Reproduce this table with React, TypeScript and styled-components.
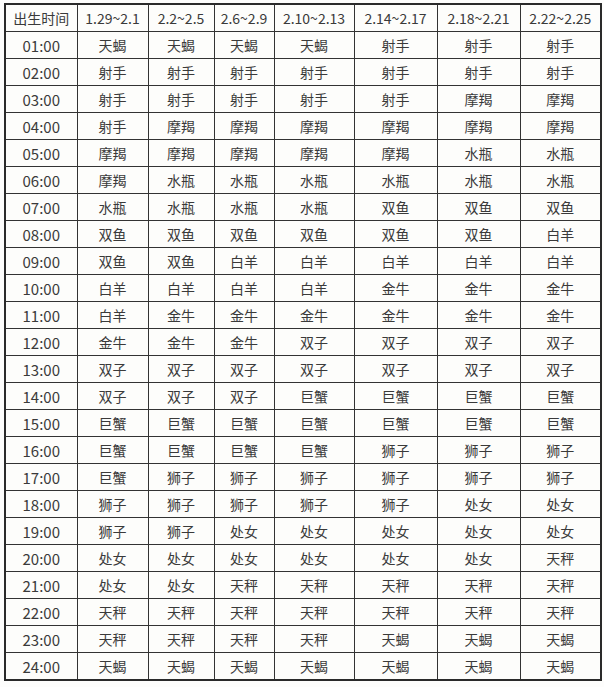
import React from 'react';
import styled, { createGlobalStyle } from 'styled-components';

const GlobalStyle = createGlobalStyle`
  html, body {
    margin: 0;
    padding: 0;
    background: #fdfdfc;
  }
  body {
    font-family: "Noto Sans CJK SC", "Noto Sans", sans-serif;
    color: #333;
  }
`;

const Page = styled.div`
  padding: 3px 0 0 4px;
`;

const Table = styled.table`
  border-collapse: collapse;
  table-layout: fixed;
  width: 596px;
  border: 2px solid #2a2a2a;
  background: #fdfdfb;
`;

const HeadCell = styled.th`
  height: 26px;
  padding: 0;
  border: 1px solid #333;
  font-weight: normal;
  font-size: 14px;
  line-height: 1;
  text-align: center;
  color: #3a3a3a;
  white-space: nowrap;
`;

const Cell = styled.td<{ $time?: boolean }>`
  height: 26px;
  padding: 0;
  border: 1px solid #333;
  font-size: ${({ $time }) => ($time ? '15px' : '14px')};
  line-height: 1;
  text-align: center;
  color: #3a3a3a;
`;

const columns = [
  { label: '出生时间', width: 72 },
  { label: '1.29~2.1', width: 71 },
  { label: '2.2~2.5', width: 66 },
  { label: '2.6~2.9', width: 60 },
  { label: '2.10~2.13', width: 80 },
  { label: '2.14~2.17', width: 83 },
  { label: '2.18~2.21', width: 83 },
  { label: '2.22~2.25', width: 81 },
];

const rows: string[][] = [
  ['01:00', '天蝎', '天蝎', '天蝎', '天蝎', '射手', '射手', '射手'],
  ['02:00', '射手', '射手', '射手', '射手', '射手', '射手', '射手'],
  ['03:00', '射手', '射手', '射手', '射手', '射手', '摩羯', '摩羯'],
  ['04:00', '射手', '摩羯', '摩羯', '摩羯', '摩羯', '摩羯', '摩羯'],
  ['05:00', '摩羯', '摩羯', '摩羯', '摩羯', '摩羯', '水瓶', '水瓶'],
  ['06:00', '摩羯', '水瓶', '水瓶', '水瓶', '水瓶', '水瓶', '水瓶'],
  ['07:00', '水瓶', '水瓶', '水瓶', '水瓶', '双鱼', '双鱼', '双鱼'],
  ['08:00', '双鱼', '双鱼', '双鱼', '双鱼', '双鱼', '双鱼', '白羊'],
  ['09:00', '双鱼', '双鱼', '白羊', '白羊', '白羊', '白羊', '白羊'],
  ['10:00', '白羊', '白羊', '白羊', '白羊', '金牛', '金牛', '金牛'],
  ['11:00', '白羊', '金牛', '金牛', '金牛', '金牛', '金牛', '金牛'],
  ['12:00', '金牛', '金牛', '金牛', '双子', '双子', '双子', '双子'],
  ['13:00', '双子', '双子', '双子', '双子', '双子', '双子', '双子'],
  ['14:00', '双子', '双子', '双子', '巨蟹', '巨蟹', '巨蟹', '巨蟹'],
  ['15:00', '巨蟹', '巨蟹', '巨蟹', '巨蟹', '巨蟹', '巨蟹', '巨蟹'],
  ['16:00', '巨蟹', '巨蟹', '巨蟹', '巨蟹', '狮子', '狮子', '狮子'],
  ['17:00', '巨蟹', '狮子', '狮子', '狮子', '狮子', '狮子', '狮子'],
  ['18:00', '狮子', '狮子', '狮子', '狮子', '狮子', '处女', '处女'],
  ['19:00', '狮子', '狮子', '处女', '处女', '处女', '处女', '处女'],
  ['20:00', '处女', '处女', '处女', '处女', '处女', '处女', '天秤'],
  ['21:00', '处女', '处女', '天秤', '天秤', '天秤', '天秤', '天秤'],
  ['22:00', '天秤', '天秤', '天秤', '天秤', '天秤', '天秤', '天秤'],
  ['23:00', '天秤', '天秤', '天秤', '天秤', '天蝎', '天蝎', '天蝎'],
  ['24:00', '天蝎', '天蝎', '天蝎', '天蝎', '天蝎', '天蝎', '天蝎'],
];

const App: React.FC = () => {
  return (
    <Page>
      <GlobalStyle />
      <Table>
        <colgroup>
          {columns.map(col => (
            <col key={col.label} style={{ width: col.width }} />
          ))}
        </colgroup>
        <thead>
          <tr>
            {columns.map(col => (
              <HeadCell key={col.label}>{col.label}</HeadCell>
            ))}
          </tr>
        </thead>
        <tbody>
          {rows.map(row => (
            <tr key={row[0]}>
              {row.map((value, i) => (
                <Cell key={i} $time={i === 0}>
                  {value}
                </Cell>
              ))}
            </tr>
          ))}
        </tbody>
      </Table>
    </Page>
  );
};

export default App;
